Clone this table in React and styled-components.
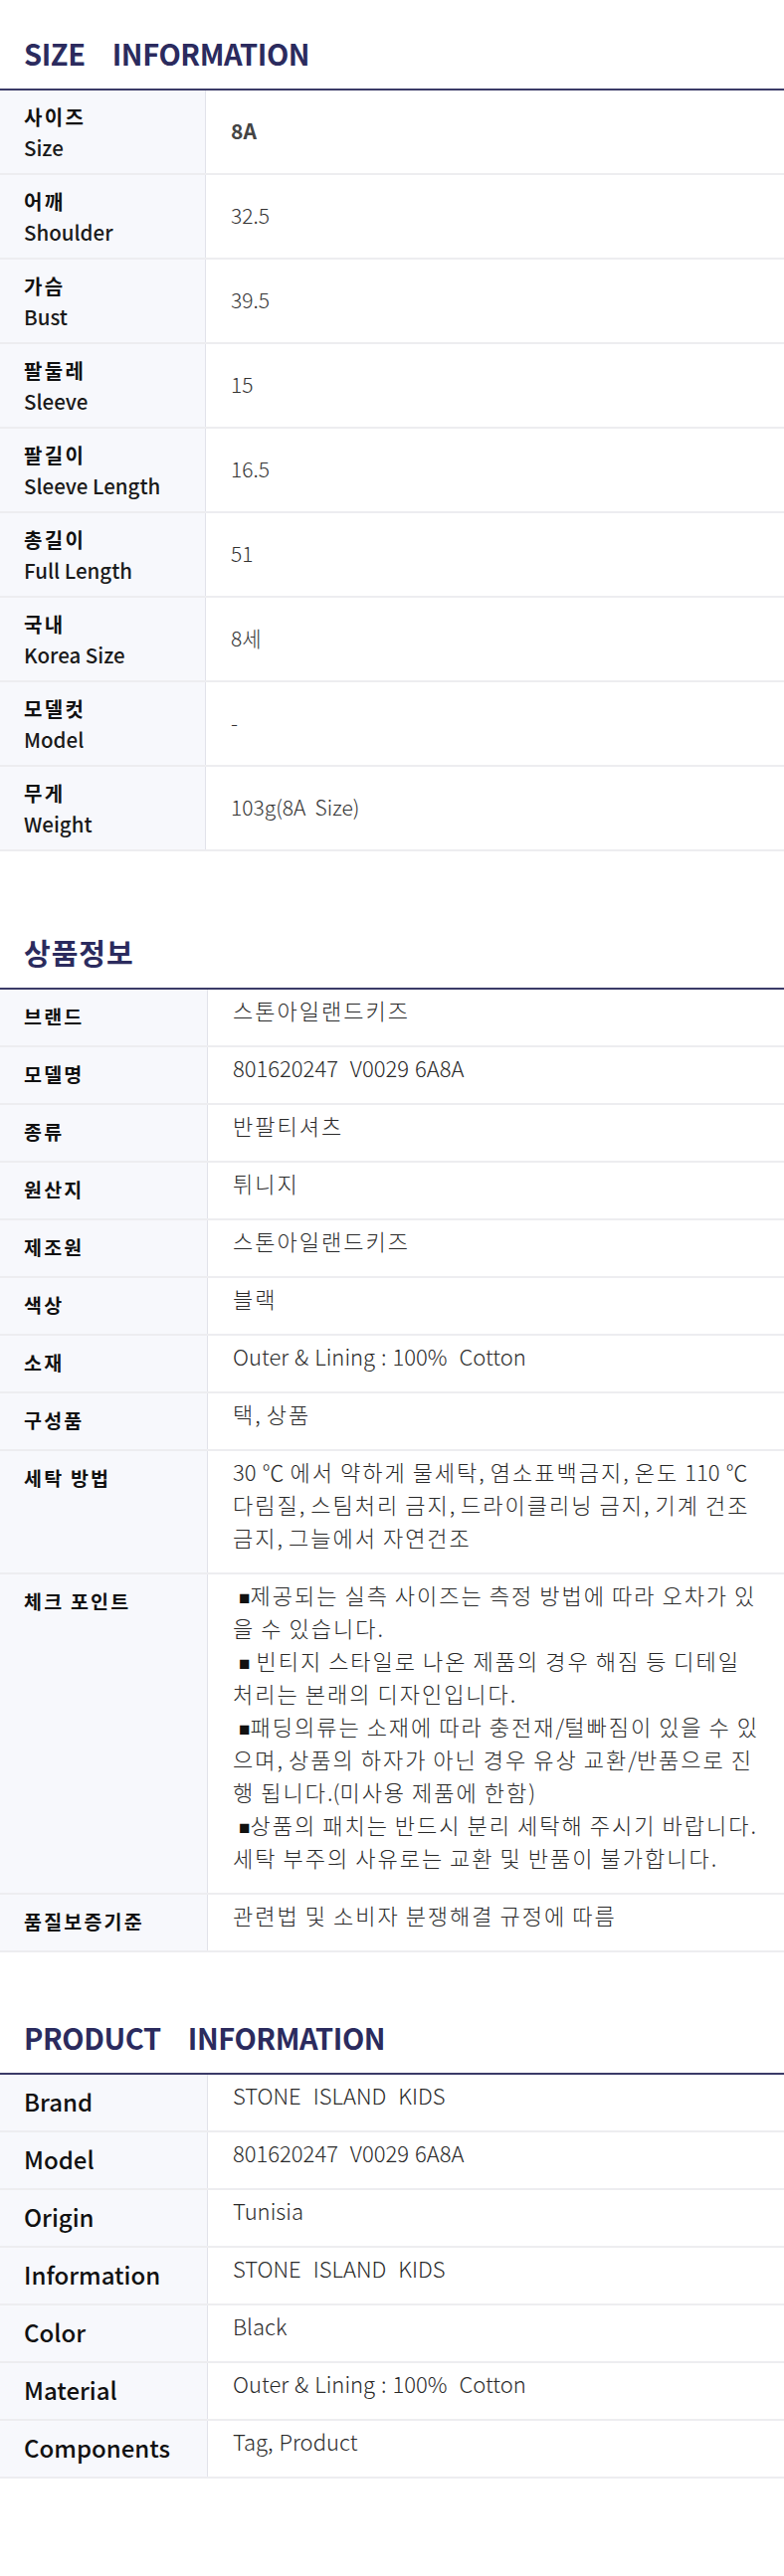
import styled, { createGlobalStyle } from "styled-components";

const GlobalStyle = createGlobalStyle`
  body {
    margin: 0;
    background: #fff;
    font-family: "Noto Sans CJK KR", "Noto Sans", sans-serif;
    color: #111;
  }
`;

const sizeRows = [
  { ko: "사이즈", en: "Size", value: "8A", strong: true },
  { ko: "어깨", en: "Shoulder", value: "32.5" },
  { ko: "가슴", en: "Bust", value: "39.5" },
  { ko: "팔둘레", en: "Sleeve", value: "15" },
  { ko: "팔길이", en: "Sleeve Length", value: "16.5" },
  { ko: "총길이", en: "Full Length", value: "51" },
  { ko: "국내", en: "Korea Size", value: "8세" },
  { ko: "모델컷", en: "Model", value: "-" },
  { ko: "무게", en: "Weight", value: "103g(8A  Size)" },
];

const infoRows = [
  { label: "브랜드", value: "스톤아일랜드키즈" },
  { label: "모델명", value: "801620247  V0029 6A8A" },
  { label: "종류", value: "반팔티셔츠" },
  { label: "원산지", value: "튀니지" },
  { label: "제조원", value: "스톤아일랜드키즈" },
  { label: "색상", value: "블랙" },
  { label: "소재", value: "Outer & Lining : 100%  Cotton" },
  { label: "구성품", value: "택, 상품" },
  {
    label: "세탁 방법",
    value: "30 ℃ 에서 약하게 물세탁, 염소표백금지, 온도 110 ℃ 다림질, 스팀처리 금지, 드라이클리닝 금지, 기계 건조 금지, 그늘에서 자연건조",
  },
  {
    label: "체크 포인트",
    bullets: [
      "제공되는 실측 사이즈는 측정 방법에 따라 오차가 있을 수 있습니다.",
      " 빈티지 스타일로 나온 제품의 경우 해짐 등 디테일 처리는 본래의 디자인입니다.",
      "패딩의류는 소재에 따라 충전재/털빠짐이 있을 수 있으며, 상품의 하자가 아닌 경우 유상 교환/반품으로 진행 됩니다.(미사용 제품에 한함)",
      "상품의 패치는 반드시 분리 세탁해 주시기 바랍니다. 세탁 부주의 사유로는 교환 및 반품이 불가합니다.",
    ],
  },
  { label: "품질보증기준", value: "관련법 및 소비자 분쟁해결 규정에 따름" },
];

const productRows = [
  { label: "Brand", value: "STONE  ISLAND  KIDS" },
  { label: "Model", value: "801620247  V0029 6A8A" },
  { label: "Origin", value: "Tunisia" },
  { label: "Information", value: "STONE  ISLAND  KIDS" },
  { label: "Color", value: "Black" },
  { label: "Material", value: "Outer & Lining : 100%  Cotton" },
  { label: "Components", value: "Tag, Product" },
];

// the original font sets hangul wider than latin, so hangul runs get their own spacing
const spaced = (text) =>
  text
    .split(/([\uAC00-\uD7A3]+)/)
    .map((part, i) =>
      /[\uAC00-\uD7A3]/.test(part) ? <Hangul key={i}>{part}</Hangul> : part
    );

export default function App() {
  return (
    <Page>
      <GlobalStyle />

      <Section $top={35}>
        <Heading>
          <span>SIZE</span>
          <span>INFORMATION</span>
        </Heading>
        <Table>
          {sizeRows.map((r) => (
            <Row key={r.ko} $col={207}>
              <SizeLabel>
                <Ko>{r.ko}</Ko>
                <En>{r.en}</En>
              </SizeLabel>
              <SizeValue $strong={r.strong}>{spaced(r.value)}</SizeValue>
            </Row>
          ))}
        </Table>
      </Section>

      <Section $top={83}>
        <Heading $ko>상품정보</Heading>
        <Table>
          {infoRows.map((r) => (
            <Row key={r.label} $col={209}>
              <Label>{r.label}</Label>
              <Value>
                {r.bullets
                  ? r.bullets.map((b, i) => (
                      <Bullet key={i}>
                        {"\u00a0"}
                        <Square>■</Square>
                        {spaced(b)}
                      </Bullet>
                    ))
                  : spaced(r.value)}
              </Value>
            </Row>
          ))}
        </Table>
      </Section>

      <Section $top={67}>
        <Heading>
          <span>PRODUCT</span>
          <span>INFORMATION</span>
        </Heading>
        <Table>
          {productRows.map((r) => (
            <Row key={r.label} $col={209}>
              <Label $en>{r.label}</Label>
              <Value>{r.value}</Value>
            </Row>
          ))}
        </Table>
      </Section>
    </Page>
  );
}

const Page = styled.div`
  width: 788px;
  padding-bottom: 98px;
`;

const Section = styled.section`
  padding-top: ${(p) => p.$top}px;
`;

const Heading = styled.h2`
  display: flex;
  gap: 27px;
  margin: 0;
  padding: 0 24px 18px;
  height: 36px;
  line-height: 36px;
  font-size: 29px;
  font-weight: 700;
  color: #2b2b5e;
  letter-spacing: ${(p) => (p.$ko ? "1px" : "-0.4px")};
`;

const Table = styled.div`
  border-top: 2px solid #3b3b68;
`;

const Row = styled.div`
  display: grid;
  grid-template-columns: ${(p) => p.$col}px 1fr;
  border-bottom: 2px solid #ededf0;
`;

const SizeLabel = styled.div`
  display: flex;
  flex-direction: column;
  padding: 11px 24px 10px;
  background: #f7f8fc;
  border-right: 1px solid #e2e3ea;
  line-height: 31px;
`;

const Ko = styled.span`
  font-size: 20px;
  font-weight: 700;
  letter-spacing: 2.4px;
  color: #111;
`;

const En = styled.span`
  font-size: 20.5px;
  font-weight: 500;
  color: #1a1a1a;
`;

const SizeValue = styled.div`
  display: flex;
  align-items: center;
  padding: 0 24px 4px 25px;
  font-size: 21px;
  font-weight: ${(p) => (p.$strong ? 700 : 300)};
  color: ${(p) => (p.$strong ? "#444" : "#333")};
  white-space: pre;
`;

const Label = styled.div`
  padding: 10px 24px 13px;
  background: #f7f8fc;
  border-right: 1px solid #e2e3ea;
  font-size: ${(p) => (p.$en ? 24 : 19.5)}px;
  font-weight: ${(p) => (p.$en ? 500 : 700)};
  letter-spacing: ${(p) => (p.$en ? 0 : 2.2)}px;
  line-height: 33px;
  color: #111;
`;

const Value = styled.div`
  padding: 4px 21px 19px 25px;
  font-size: 22px;
  font-weight: 300;
  line-height: 33px;
  word-spacing: 1.1px;
  color: #2a2a2a;
  white-space: pre-wrap;
  word-break: break-all;
`;

const Hangul = styled.span`
  letter-spacing: 2px;
`;

const Bullet = styled.div``;

const Square = styled.span`
  font-family: "DejaVu Sans", sans-serif;
  font-size: 19px;
  line-height: 1;
  color: #111;
`;
